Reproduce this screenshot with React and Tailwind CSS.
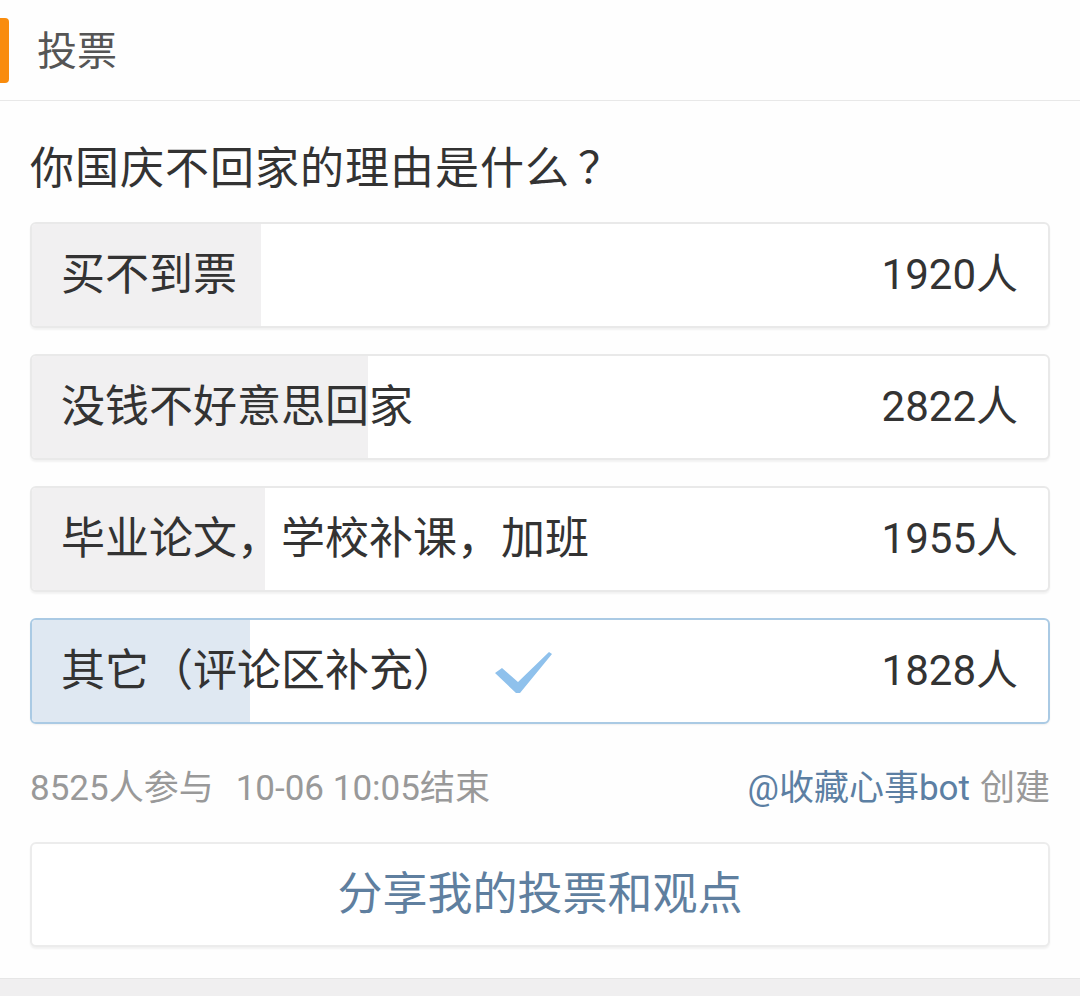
import React from "react";

const options = [
  { label: "买不到票", count: 1920 },
  { label: "没钱不好意思回家", count: 2822 },
  { label: "毕业论文，学校补课，加班", count: 1955 },
  { label: "其它（评论区补充）", count: 1828, selected: true },
];
const total = 8525;

function Check() {
  return (
    <svg width="58" height="46" viewBox="0 0 58 46" className="ml-[38px] mt-[2px]">
      <polygon
        points="0,24 7,19 23,33 54,3 57,5 25,44 21,44"
        fill="#8fc1ec"
      />
    </svg>
  );
}

export default function App() {
  return (
    <div
      className="w-[1080px] h-[996px] bg-[#fefefe] flex flex-col text-[#333]"
      style={{ fontFamily: "Roboto, 'Noto Sans CJK SC', sans-serif" }}
    >
      {/* header */}
      <div className="h-[101px] border-b-[1.5px] border-[#e8e8e8] flex items-center relative">
        <div className="absolute left-0 top-[18px] w-[9px] h-[65px] bg-[#f98c0d] rounded-r-[4px]" />
        <div className="pl-[37px] text-[40px] text-[#555] leading-none pt-[4px]">投票</div>
      </div>

      {/* question */}
      <div
        className="h-[121px] flex items-center pl-[30px] pt-[6px] text-[44px] leading-none text-[#333] tracking-[1px]"
        style={{ fontFamily: "'Noto Sans CJK SC', sans-serif" }}
      >
        你国庆不回家的理由是什么<span className="ml-[8px]">？</span>
      </div>

      {/* options */}
      <div className="flex flex-col gap-[26px] px-[30px]">
        {options.map((o) => (
          <div
            key={o.label}
            className={
              o.selected
                ? "relative h-[106px] rounded-[6px] border-2 border-[#aacae4] bg-white overflow-hidden shadow-[0_1px_2px_rgba(0,0,0,0.06)]"
                : "relative h-[106px] rounded-[6px] border-2 border-[#e9e9e9] bg-white overflow-hidden shadow-[0_2px_2px_rgba(0,0,0,0.05)]"
            }
          >
            <div
              className={
                o.selected
                  ? "absolute left-0 top-0 bottom-0 bg-[#dfe8f2]"
                  : "absolute left-0 top-0 bottom-0 bg-[#f1f0f1]"
              }
              style={{ width: `${(o.count / total) * 100}%` }}
            />
            <div className="relative h-full flex items-center justify-between pl-[29px] pr-[30px]">
              <div className="flex items-center text-[44px] leading-none text-[#333]">
                <span>{o.label}</span>
                {o.selected && <Check />}
              </div>
              <div className="text-[42px] leading-none text-[#333]">{o.count}人</div>
            </div>
          </div>
        ))}
      </div>

      {/* footer */}
      <div className="h-[118px] flex items-center justify-between px-[30px] pt-[10px] text-[35px] leading-none text-[#999]">
        <div className="flex items-center">
          <span>8525人参与</span>
          <span className="ml-[22px]">10-06 10:05结束</span>
        </div>
        <div>
          <span className="text-[#5c7fa3]">@收藏心事bot</span>
          <span className="ml-[10px]">创建</span>
        </div>
      </div>

      {/* share */}
      <div className="px-[30px]">
        <div className="h-[105px] rounded-[6px] border-2 border-[#ececec] bg-white shadow-[0_2px_2px_rgba(0,0,0,0.05)] flex items-center justify-center text-[45px] leading-none text-[#5f7f9f]">
          分享我的投票和观点
        </div>
      </div>

      <div className="h-[31px]" />
      <div className="flex-1 bg-[#f0eff0] border-t border-[#e6e6e6]" />
    </div>
  );
}
